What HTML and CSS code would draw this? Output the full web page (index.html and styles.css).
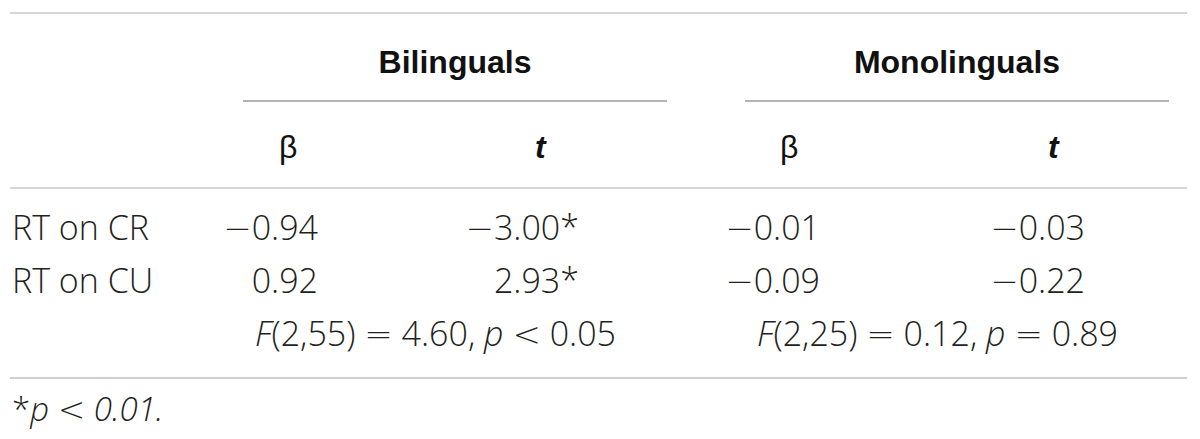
FILE: index.html
```html
<!DOCTYPE html>
<html lang="en">
<head>
<meta charset="utf-8">
<title>Regression table</title>
<link rel="stylesheet" href="styles.css">
</head>
<body>
<div class="table">
  <div class="row head-groups">
    <div class="cell"></div>
    <div class="group group-bi">Bilinguals</div>
    <div class="group group-mono">Monolinguals</div>
  </div>
  <div class="row head-sub">
    <div class="cell"></div>
    <div class="cell sub b1">β</div>
    <div class="cell sub t1"><i class="bi">t</i></div>
    <div class="cell sub b2">β</div>
    <div class="cell sub t2"><i class="bi">t</i></div>
  </div>
  <div class="body">
    <div class="row">
      <div class="cell label">RT on CR</div>
      <div class="cell num n1"><span class="op">−</span>0.94</div>
      <div class="cell num n2"><span class="op">−</span>3.00*</div>
      <div class="cell num n3"><span class="op">−</span>0.01</div>
      <div class="cell num n4"><span class="op">−</span>0.03</div>
    </div>
    <div class="row">
      <div class="cell label">RT on CU</div>
      <div class="cell num n1">0.92</div>
      <div class="cell num n2">2.93*</div>
      <div class="cell num n3"><span class="op">−</span>0.09</div>
      <div class="cell num n4"><span class="op">−</span>0.22</div>
    </div>
    <div class="row">
      <div class="cell label"></div>
      <div class="stat stat-bi"><i>F</i>(2,55) <span class="op">=</span> 4.60, <i>p</i> <span class="op">&lt;</span> 0.05</div>
      <div class="stat stat-mono"><i>F</i>(2,25) <span class="op">=</span> 0.12, <i>p</i> <span class="op">=</span> 0.89</div>
    </div>
  </div>
  <p class="note">*<i>p <span class="op">&lt;</span> 0.01.</i></p>
</div>
</body>
</html>
```

FILE: styles.css
```css
html, body {
  margin: 0;
  padding: 0;
  background: #ffffff;
}

body {
  font-family: "Open Sans", Roboto, "Liberation Sans", Arial, sans-serif;
  font-weight: 300;
  color: #231f20;
  font-size: 34px;
}

.op {
  font-family: "DejaVu Sans", sans-serif;
  font-weight: 200;
  font-style: normal;
}

.table {
  margin: 12px 0 0 10px;
  width: 1177px;
  border-top: 2px solid #d6d6d6;
}

.row {
  display: grid;
  grid-template-columns: 210px 235px 245px 257px 230px;
  line-height: 52px;
}

.head-groups {
  line-height: 40px;
}

.group {
  grid-column: span 2;
  text-align: center;
  font-family: "Liberation Sans", Arial, sans-serif;
  font-size: 32px;
  font-weight: 700;
  color: #111;
  padding: 28px 0 18px;
  border-bottom: 2px solid #b3b3b3;
}

.group-bi {
  margin: 0 33px 0 23px;
}

.group-mono {
  margin: 0 18px 0 45px;
}

.head-sub {
  line-height: 40px;
  border-bottom: 2px solid #d6d6d6;
}

.sub {
  padding: 25px 0 20px;
  font-family: "Liberation Sans", Arial, sans-serif;
  font-size: 32px;
  font-weight: 400;
  color: #111;
}

.bi {
  font-weight: 700;
}

.b1 { padding-left: 59px; }
.t1 { padding-left: 80px; }
.b2 { padding-left: 80px; }
.t2 { padding-left: 91px; }

.body {
  padding: 12px 0 17px;
  border-bottom: 2px solid #d0d0d0;
}

.label {
  padding-left: 2px;
}

.num {
  text-align: right;
}

.n1 { padding-right: 137px; }
.n2 { padding-right: 121px; }
.n3 { padding-right: 137px; }
.n4 { padding-right: 102px; }

.stat {
  grid-column: span 2;
  white-space: nowrap;
}

.stat-bi { padding-left: 35px; }
.stat-mono { padding-left: 57px; }

.note {
  margin: 10px 0 0 2px;
  font-size: 33px;
  line-height: 40px;
}
```
